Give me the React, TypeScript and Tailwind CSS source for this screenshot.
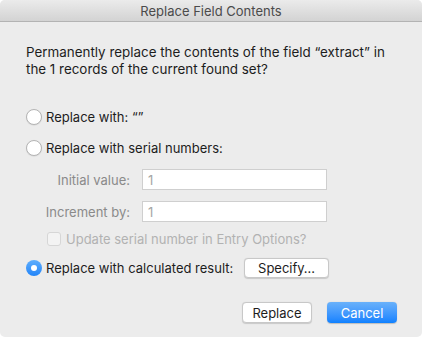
function Radio({ checked }: { checked?: boolean }) {
  if (checked) {
    return (
      <span className="flex h-4 w-4 shrink-0 items-center justify-center rounded-full bg-gradient-to-b from-[#5eaefd] to-[#1f84f8]">
        <span className="h-[6px] w-[6px] rounded-full bg-white" />
      </span>
    )
  }
  return <span className="h-4 w-4 shrink-0 rounded-full border border-[#b4b4b4] bg-white shadow-[0_0.5px_1px_rgba(0,0,0,0.1)]" />
}

function Field({ label, value }: { label: string; value: string }) {
  return (
    <div className="flex items-center">
      <span className="w-[116px] pr-[12px] text-right text-[#8a8a8a]">{label}</span>
      <div className="flex h-[21px] w-[185px] items-center border border-[#cfcfcf] bg-white pl-[5px] text-[#a5a5a5]">{value}</div>
    </div>
  )
}

export default function App() {
  return (
    <div
      className="h-[337px] w-[422px] overflow-hidden rounded-[5px] bg-[#ececec] text-[13px] leading-[16px] text-[#1d1d1d]"
      style={{ fontFamily: 'Inter, "Liberation Sans", sans-serif' }}
    >
      <div className="flex h-[22px] items-center justify-center border-b border-[#b3b3b3] bg-gradient-to-b from-[#ebebeb] to-[#d3d3d3] text-[#4b4b4b]">
        Replace Field Contents
      </div>

      <div className="pl-[26px] pt-[22px]">
        <p className="w-[370px] text-[13.4px] leading-[17px]">
          Permanently replace the contents of the field “extract” in the 1 records of the current found set?
        </p>

        <div className="mt-[31px] flex flex-col">
          <label className="flex items-center gap-[4px]">
            <Radio />
            <span>Replace with: “”</span>
          </label>
          <label className="mt-[15px] flex items-center gap-[4px]">
            <Radio />
            <span>Replace with serial numbers:</span>
          </label>

          <div className="mt-[13px] flex flex-col gap-[11px]">
            <Field label="Initial value:" value="1" />
            <Field label="Increment by:" value="1" />
          </div>

          <label className="ml-[21px] mt-[9px] flex items-center gap-[5px] text-[#b2b2b2]">
            <span className="h-[14px] w-[14px] rounded-[3px] border border-[#d6d6d6] bg-[#f3f3f3]" />
            <span>Update serial number in Entry Options?</span>
          </label>

          <div className="mt-[11px] flex items-center">
            <label className="flex w-[218px] items-center gap-[4px]">
              <Radio checked />
              <span>Replace with calculated result:</span>
            </label>
            <button className="h-[20px] w-[85px] rounded-[4px] border border-[#c8c8c8] bg-white text-[#1d1d1d] shadow-[0_0.5px_1px_rgba(0,0,0,0.15)]">
              Specify…
            </button>
          </div>
        </div>
      </div>

      <div className="mr-[25px] mt-[24px] flex justify-end gap-[15px]">
        <button className="h-[21px] w-[70px] rounded-[4px] border border-[#c8c8c8] bg-white text-[#1d1d1d] shadow-[0_0.5px_1px_rgba(0,0,0,0.15)]">
          Replace
        </button>
        <button className="h-[21px] w-[70px] rounded-[4px] bg-gradient-to-b from-[#69b1fa] to-[#0d81ff] text-white shadow-[0_0.5px_1px_rgba(0,0,0,0.2)]">
          Cancel
        </button>
      </div>
    </div>
  )
}
